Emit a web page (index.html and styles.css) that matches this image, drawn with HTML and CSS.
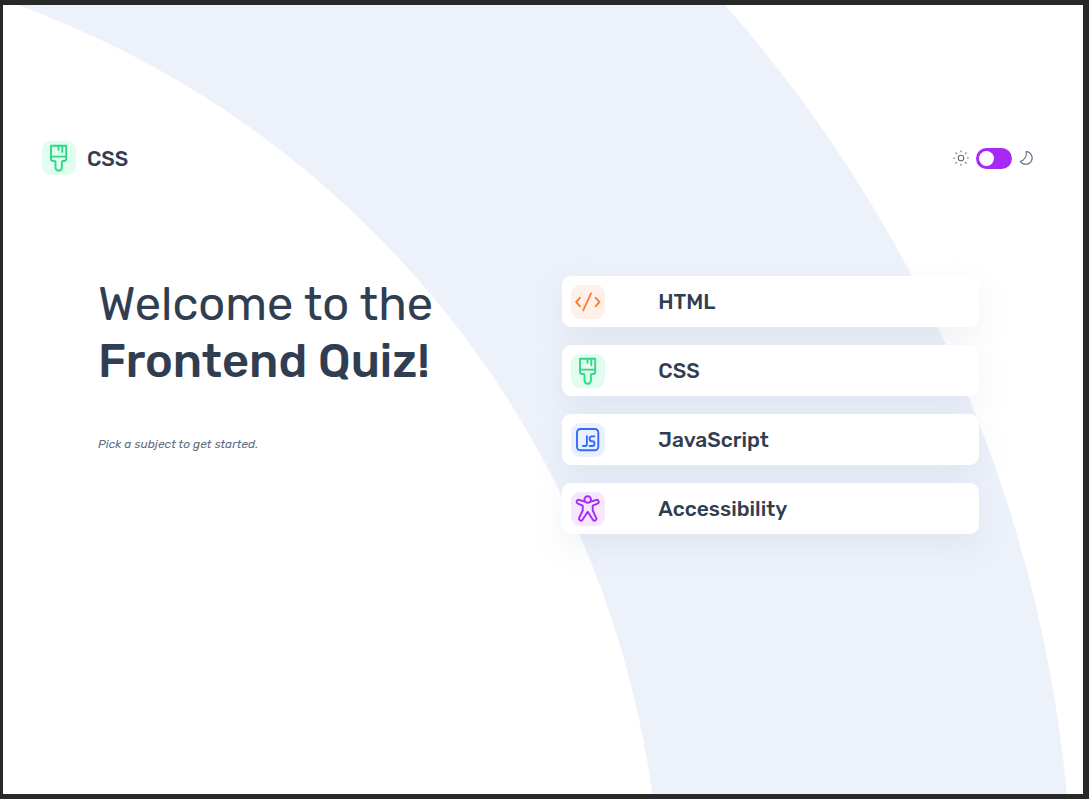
FILE: index.html
```html
<!DOCTYPE html>
<html lang="en">
<head>
<meta charset="utf-8">
<meta name="viewport" content="width=device-width, initial-scale=1">
<title>Frontend Quiz</title>
<link rel="stylesheet" href="styles.css">
</head>
<body>
<svg class="defs" aria-hidden="true">
  <symbol id="icon-html" viewBox="0 0 34 34"><path d="M9 12.7 5.2 17 9 21.3M20 8.4 12.2 25.4M24.6 12.7 28.4 17l-3.8 4.3"/></symbol>
  <symbol id="icon-css" viewBox="0 0 34 34"><path d="M9 4.8H24.2V17.8a2.2 2.2 0 0 1-2.2 2.2H20.900a1 1 0 0 0-1 1V26.600a3.200 3.200 0 0 1-6.400 0V21a1 1 0 0 0-1-1H11.200a2.200 2.200 0 0 1-2.200-2.200ZM9 15.600H24.200M16.500 4.800V8.800M20.300 4.800V11"/></symbol>
  <symbol id="icon-js" viewBox="0 0 34 34"><rect x="6" y="6" width="21.300" height="21.300" rx="3.500"/><path d="M15.900 13.200V21.500a1.500 1.500 0 0 1-1.500 1.500H12M23.400 13.400H20.700a2 2 0 0 0-2 2V16.200a2 2 0 0 0 2 2H21.400a2 2 0 0 1 2 2V21a2 2 0 0 1-2 2H18.700"/></symbol>
  <symbol id="icon-a11y" viewBox="0 0 34 34"><circle cx="16.700" cy="7.500" r="3.300"/><path d="M13.600 9.600 8.400 8A1.900 1.900 0 0 0 6.900 11.600L11.700 13.700V18.500L8.200 25.800A1.900 1.900 0 0 0 11.700 27.500L16.700 19.700 21.700 27.500A1.900 1.900 0 0 0 25.200 25.800L21.700 18.500V13.700L26.500 11.600A1.900 1.900 0 0 0 25 8L19.800 9.600"/></symbol>
</svg>
<main class="quiz">
  <svg class="backdrop" viewBox="0 0 1080 789" preserveAspectRatio="xMinYMin slice" aria-hidden="true"><circle cx="-323" cy="921" r="1187" fill="none" stroke="#edf1fa" stroke-width="412"/></svg>
  <header class="topbar">
    <div class="subject">
      <span class="tile tile-css"><svg class="icon" aria-hidden="true"><use href="#icon-css"/></svg></span>
      <span class="subject-name">CSS</span>
    </div>
    <div class="theme">
      <svg class="theme-icon" viewBox="0 0 16 16" aria-hidden="true"><circle cx="8" cy="8" r="2.800"/><path d="M8 .7v1M8 14.300v1M.7 8h1M14.300 8h1M2.800 2.800l.8.8M12.400 12.400l.8.8M2.800 13.200l.8-.8M12.400 3.600l.8-.8"/></svg>
      <input class="switch" type="checkbox" role="switch" aria-label="Dark mode">
      <svg class="theme-icon" viewBox="0 0 16 16" aria-hidden="true"><path d="M7.200 1.500A6.400 6.400 0 1 1 1.300 11.200C5.500 10.800 8 6.500 7.200 1.500Z"/></svg>
    </div>
  </header>
  <div class="content">
    <section class="intro">
      <h1 class="title">Welcome to the <strong class="title-strong">Frontend Quiz!</strong></h1>
      <p class="hint">Pick a subject to get started.</p>
    </section>
    <div class="options">
      <button class="option" type="button"><span class="tile tile-html"><svg class="icon" aria-hidden="true"><use href="#icon-html"/></svg></span>HTML</button>
      <button class="option" type="button"><span class="tile tile-css"><svg class="icon" aria-hidden="true"><use href="#icon-css"/></svg></span>CSS</button>
      <button class="option" type="button"><span class="tile tile-js"><svg class="icon" aria-hidden="true"><use href="#icon-js"/></svg></span>JavaScript</button>
      <button class="option" type="button"><span class="tile tile-a11y"><svg class="icon" aria-hidden="true"><use href="#icon-a11y"/></svg></span>Accessibility</button>
    </div>
  </div>
</main>
</body>
</html>
```
FILE: styles.css
```css
* { box-sizing: border-box; }

body {
  margin: 0;
  min-height: 100vh;
  display: flex;
  padding: 5px 6px 5px 3px;
  background: #282828;
  color: #313e51;
  font-family: Rubik, Roboto, sans-serif;
}

.defs { position: absolute; width: 0; height: 0; }

.quiz {
  position: relative;
  flex: 1;
  overflow: hidden;
  padding: 136px 48px 40px 39px;
  background: #fff;
}

.backdrop { position: absolute; inset: 0; width: 100%; height: 100%; }

.topbar, .content { position: relative; display: flex; }
.topbar { justify-content: space-between; align-items: center; }

.subject { display: flex; align-items: center; gap: 11px; }
.subject-name { font-size: 21px; font-weight: 500; }

.tile {
  flex: none;
  display: flex;
  width: 34px;
  height: 34px;
  border-radius: 9px;
}
.tile-html { background: #fff1e9; color: #ff7e35; }
.tile-css { background: #e0fdef; color: #2fd887; }
.tile-js { background: #ebf0ff; color: #306aff; }
.tile-a11y { background: #f6e7ff; color: #a729f5; }

.icon {
  width: 100%;
  height: 100%;
  fill: none;
  stroke: currentColor;
  stroke-width: 1.9;
  stroke-linecap: round;
  stroke-linejoin: round;
}

.theme { display: flex; align-items: center; gap: 7px; }
.theme-icon {
  width: 16px;
  height: 16px;
  fill: none;
  stroke: #626c7f;
  stroke-width: 1.1;
  stroke-linecap: round;
  stroke-linejoin: round;
}

.switch {
  appearance: none;
  display: flex;
  align-items: center;
  width: 36px;
  height: 21px;
  margin: 0;
  padding: 3px;
  border-radius: 11px;
  background: #a729f5;
  cursor: pointer;
}
.switch::before {
  content: "";
  width: 15px;
  height: 15px;
  border-radius: 50%;
  background: #fff;
}
.switch:checked { justify-content: flex-end; }

.content {
  justify-content: space-between;
  align-items: flex-start;
  padding: 101px 56px 0;
}

.title { margin: 0; width: min-content; font-size: 47px; font-weight: 400; line-height: 57px; white-space: nowrap; }
.title-strong { display: block; font-weight: 500; }
.hint { margin: 45px 0 0; font-size: 12px; font-style: italic; line-height: 18px; color: #626c7f; }

.options { display: flex; flex-direction: column; gap: 18px; width: 47.3%; }
.option {
  display: flex;
  align-items: center;
  gap: 53px;
  height: 51px;
  padding: 0 9px;
  border: 0;
  border-radius: 9px;
  background: #fff;
  box-shadow: 0 12px 30px rgba(143, 160, 193, 0.14);
  color: inherit;
  font: 500 21px Rubik, Roboto, sans-serif;
  text-align: left;
  cursor: pointer;
}
```
